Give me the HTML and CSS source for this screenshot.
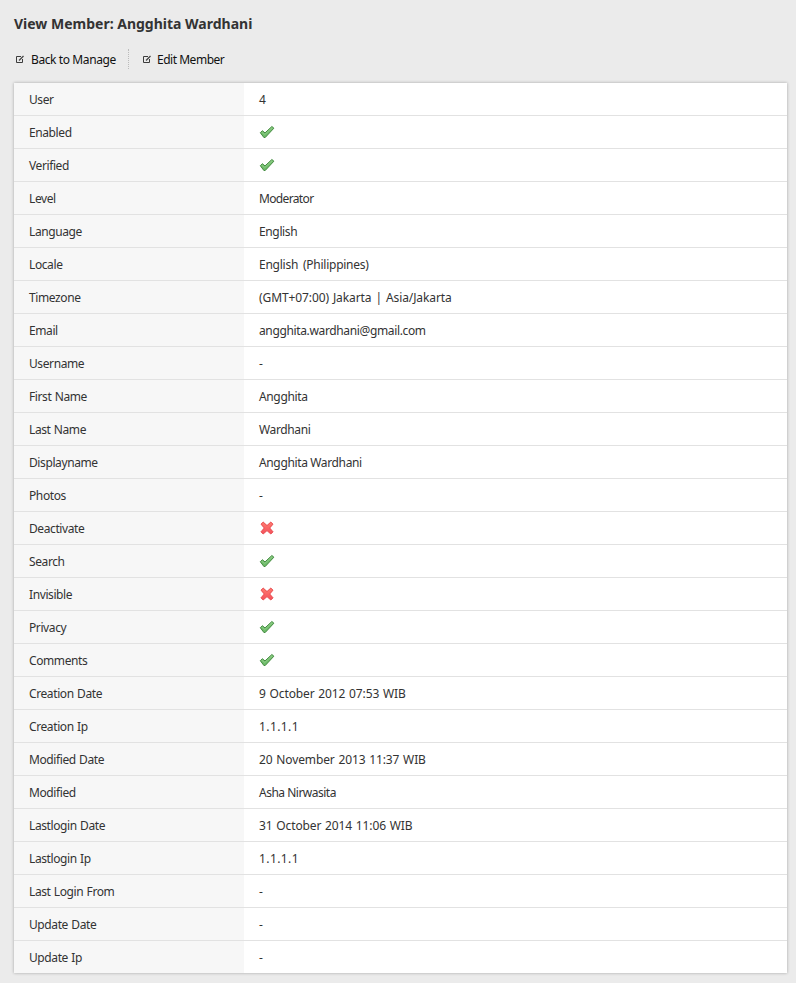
FILE: index.html
```html
<!DOCTYPE html>
<html lang="en">
<head>
<meta charset="utf-8">
<title>View Member: Angghita Wardhani</title>
<link rel="stylesheet" href="styles.css">
</head>
<body>
<svg class="defs" aria-hidden="true">
<defs>
<linearGradient id="g" x1="0" y1="0" x2="0" y2="1"><stop offset="0" stop-color="#82c77b"/><stop offset="1" stop-color="#69b865"/></linearGradient>
<linearGradient id="r" x1="0" y1="0" x2="0" y2="1"><stop offset="0" stop-color="#ff7b70"/><stop offset="1" stop-color="#f4505b"/></linearGradient>
<symbol id="yes" viewBox="0 0 16 16"><path d="M1.300 8.700 3.300 6.700l2.700 2.200L12.900 2.500l2 1.700L6.200 13.500H4.900z" fill="url(#g)" stroke="#438b40" stroke-linejoin="round"/><path d="m2.800 8.100 2.900 2.500 7.300-7" fill="none" stroke="#98d290" stroke-width=".6"/></symbol>
<symbol id="no" viewBox="0 0 16 16"><path d="m2 4.200 2.200-2.100L8 5.500l3.800-3.400L14 4.200 10.700 8l3.300 3.800-2.200 2.200L8 10.600 4.200 14 2 11.800 5.300 8z" fill="url(#r)" stroke="#e8484c" stroke-linejoin="round"/></symbol>
<symbol id="edit" viewBox="0 0 10 10"><path d="M6 1.500H1.500v6h6V4" fill="none" stroke="#3c3c3c"/><path d="M4 5.500 8.500 1" fill="none" stroke="#444" stroke-width="1.200"/></symbol>
</defs>
</svg>
<main>
<h1>View Member: Angghita Wardhani</h1>
<nav>
<a class="back"><svg><use href="#edit"/></svg><span>Back to Manage</span></a>
<a class="edit"><svg><use href="#edit"/></svg><span>Edit Member</span></a>
</nav>
<table>
<tr><th>User</th><td>4</td></tr>
<tr><th>Enabled</th><td><svg><use href="#yes"/></svg></td></tr>
<tr><th>Verified</th><td><svg><use href="#yes"/></svg></td></tr>
<tr><th>Level</th><td class="level">Moderator</td></tr>
<tr><th>Language</th><td>English</td></tr>
<tr><th>Locale</th><td class="locale">English (Philippines)</td></tr>
<tr><th>Timezone</th><td class="zone">(GMT+07:00) Jakarta | Asia/Jakarta</td></tr>
<tr><th>Email</th><td>angghita.wardhani@gmail.com</td></tr>
<tr><th>Username</th><td>-</td></tr>
<tr><th>First Name</th><td>Angghita</td></tr>
<tr><th>Last Name</th><td>Wardhani</td></tr>
<tr><th>Displayname</th><td>Angghita Wardhani</td></tr>
<tr><th>Photos</th><td>-</td></tr>
<tr><th>Deactivate</th><td><svg><use href="#no"/></svg></td></tr>
<tr><th>Search</th><td><svg><use href="#yes"/></svg></td></tr>
<tr><th>Invisible</th><td><svg><use href="#no"/></svg></td></tr>
<tr><th>Privacy</th><td><svg><use href="#yes"/></svg></td></tr>
<tr><th>Comments</th><td><svg><use href="#yes"/></svg></td></tr>
<tr><th>Creation Date</th><td class="date">9 October 2012 07:53 WIB</td></tr>
<tr><th>Creation Ip</th><td class="ip">1.1.1.1</td></tr>
<tr><th>Modified Date</th><td class="date">20 November 2013 11:37 WIB</td></tr>
<tr><th>Modified</th><td class="name">Asha Nirwasita</td></tr>
<tr><th>Lastlogin Date</th><td class="date">31 October 2014 11:06 WIB</td></tr>
<tr><th>Lastlogin Ip</th><td class="ip">1.1.1.1</td></tr>
<tr><th>Last Login From</th><td>-</td></tr>
<tr><th>Update Date</th><td>-</td></tr>
<tr><th>Update Ip</th><td>-</td></tr>
</table>
</main>
</body>
</html>
```
FILE: styles.css
```css
* { box-sizing: border-box; }
body { margin: 0; background: #ebebeb; color: #333; font: 12px/16px "Noto Sans", sans-serif; }
.defs { position: absolute; width: 0; height: 0; }
main { padding: 14px 9px 10px 14px; }
h1 { margin: 0; height: 20px; font-size: 14px; line-height: 20px; font-weight: 700; white-space: nowrap; }
nav { display: flex; height: 20px; margin: 15px 0 14px; color: #111; letter-spacing: -0.4px; }
nav a { display: flex; align-items: center; white-space: nowrap; }
nav svg { width: 10px; height: 10px; margin: 2px 6px 0 1px; }
nav span { padding-top: 2px; }
.back { width: 115px; border-right: 1px dotted #bbb; }
.edit { margin-left: 12px; letter-spacing: -0.48px; }
.edit svg { margin-right: 5px; }
table { width: 773px; table-layout: fixed; border-collapse: separate; border-spacing: 0; background: #fff; box-shadow: 0 0 3px rgba(0,0,0,.3); }
th, td { height: 33px; padding: 2px 15px 0; border-bottom: 1px solid #e2e2e2; text-align: left; font-weight: 400; vertical-align: middle; white-space: nowrap; letter-spacing: -0.36px; }
th { width: 230px; background: #f7f7f7; letter-spacing: -0.4px; word-spacing: 0.6px; }
tr:last-child > * { height: 32px; border-bottom: 0; }
td svg { display: block; width: 16px; height: 16px; margin-bottom: 2px; }
.level { letter-spacing: -0.65px; }
.locale { letter-spacing: -0.25px; word-spacing: 2px; }
.zone { letter-spacing: -0.1px; word-spacing: 1px; }
.name { letter-spacing: -0.5px; }
.date { letter-spacing: -0.12px; word-spacing: 0.8px; }
.ip { letter-spacing: 0.4px; }
```
